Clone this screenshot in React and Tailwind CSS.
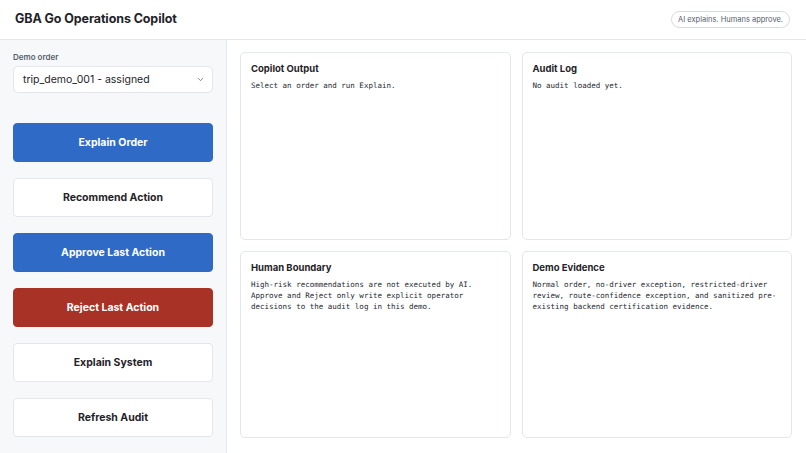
import { FiChevronDown } from 'react-icons/fi';

const sans = { fontFamily: 'Inter, "Noto Sans", sans-serif' };

const buttons = [
  { label: 'Explain Order', kind: 'primary' },
  { label: 'Recommend Action', kind: 'plain' },
  { label: 'Approve Last Action', kind: 'primary' },
  { label: 'Reject Last Action', kind: 'danger' },
  { label: 'Explain System', kind: 'plain' },
  { label: 'Refresh Audit', kind: 'plain' },
];

const btnClass = {
  primary: 'bg-[#2f6bc6] border-[#2f6bc6] text-white',
  danger: 'bg-[#a93226] border-[#a93226] text-white',
  plain: 'bg-white border-[#e3e6ea] text-[#1f2328]',
};

const cards = [
  { title: 'Copilot Output', body: 'Select an order and run Explain.' },
  { title: 'Audit Log', body: 'No audit loaded yet.' },
  {
    title: 'Human Boundary',
    body: 'High-risk recommendations are not executed by AI. Approve and Reject only write explicit operator decisions to the audit log in this demo.',
  },
  {
    title: 'Demo Evidence',
    body: 'Normal order, no-driver exception, restricted-driver review, route-confidence exception, and sanitized pre-existing backend certification evidence.',
  },
];

const Card = ({ title, body }) => (
  <div className="bg-white border border-[#e3e6ea] rounded-[5px] px-[10px] py-[10px] min-h-0">
    <h2 className="text-[9.5px] font-bold text-[#1f2328] leading-[12px] mb-[5px]">{title}</h2>
    <pre
      className="text-[7.5px] leading-[11px] text-[#24292f] whitespace-pre-wrap"
      style={{ fontFamily: '"DejaVu Sans Mono", "Liberation Mono", monospace' }}
    >
      {body}
    </pre>
  </div>
);

const App = () => {
  return (
    <div className="w-[806px] h-[453px] flex flex-col bg-white overflow-hidden" style={sans}>
      <header className="h-[40px] shrink-0 flex items-center justify-between pl-[15px] pr-[16px] border-b border-[#e3e6ea]">
        <h1 className="text-[12.5px] font-bold text-[#1f2328] tracking-[-0.1px]">GBA Go Operations Copilot</h1>
        <span className="text-[7.5px] text-[#57606a] border border-[#d6dade] rounded-full px-[6px] h-[17px] flex items-center">
          AI explains. Humans approve.
        </span>
      </header>

      <div className="flex flex-1 min-h-0">
        <aside className="w-[227px] shrink-0 bg-[#f6f8fa] border-r border-[#e3e6ea] px-[13px] pt-[11px]">
          <label className="block text-[8px] font-semibold text-[#57606a] leading-[12px] mb-[3px]">Demo order</label>
          <div className="h-[27px] bg-white border border-[#e3e6ea] rounded-[5px] flex items-center justify-between pl-[9px] pr-[7px]">
            <span className="text-[10.5px] text-[#1f2328]">trip_demo_001 - assigned</span>
            <FiChevronDown size={9} className="text-[#57606a]" />
          </div>

          <div className="flex flex-col gap-[16px] mt-[30px]">
            {buttons.map((b) => (
              <button
                key={b.label}
                className={`h-[39px] w-full rounded-[4px] border text-[10.5px] font-bold ${btnClass[b.kind]}`}
              >
                {b.label}
              </button>
            ))}
          </div>
        </aside>

        <main className="flex-1 grid grid-cols-2 grid-rows-2 gap-[11px] pl-[13px] pr-[14px] pt-[12px] pb-[15px]">
          {cards.map((c) => (
            <Card key={c.title} {...c} />
          ))}
        </main>
      </div>
    </div>
  );
};

export default App;
